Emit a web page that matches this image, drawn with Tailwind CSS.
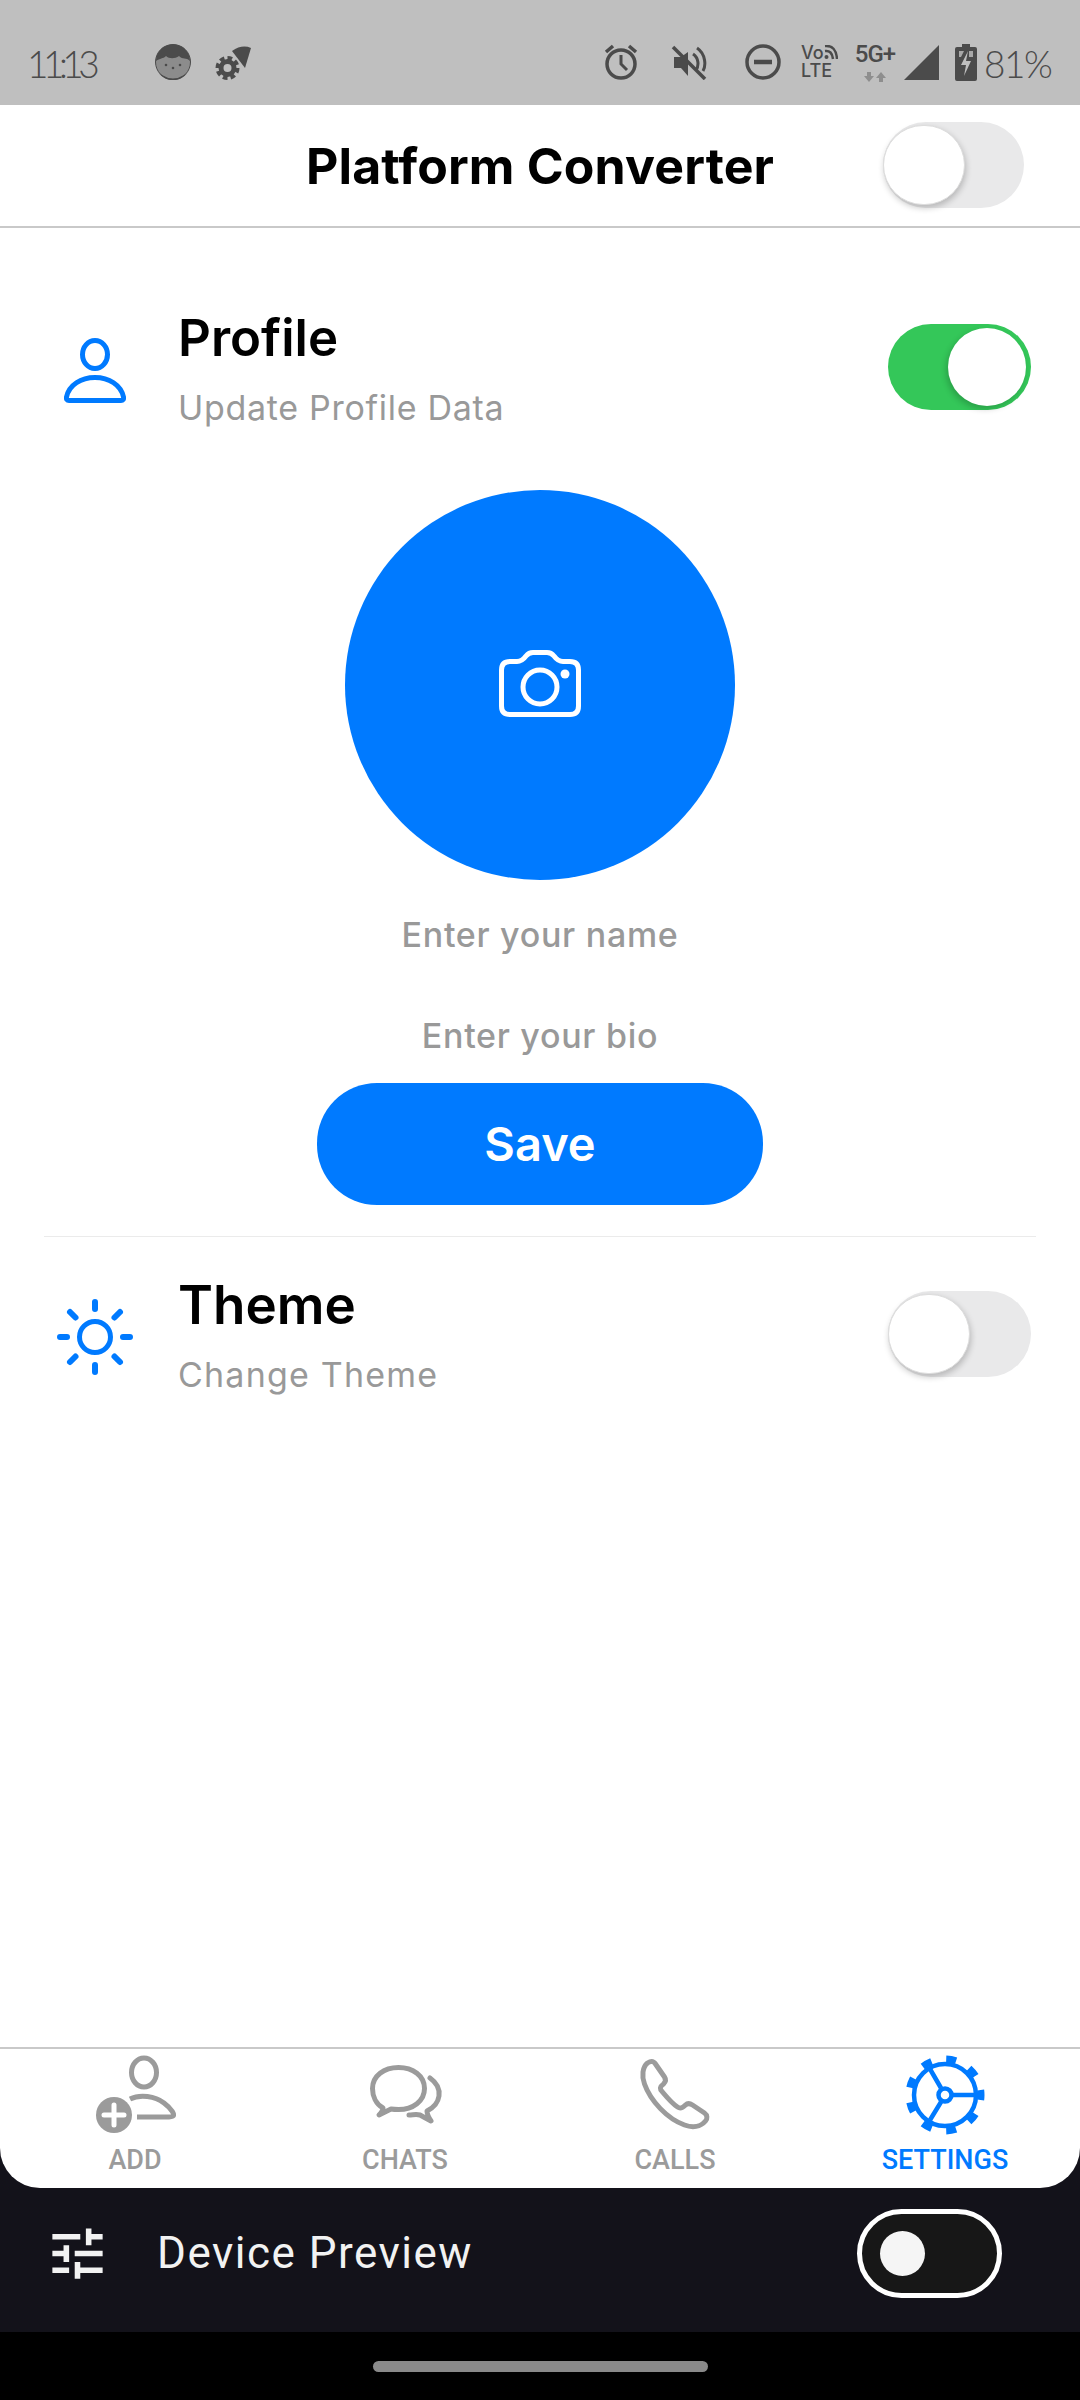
<!doctype html>
<html>
<head>
<meta charset="utf-8">
<script src="https://cdn.jsdelivr.net/npm/@tailwindcss/browser@4"></script>
</head>
<body class="m-0 bg-white">
<div class="w-[1080px] h-[2400px] flex flex-col overflow-hidden bg-white font-['Inter',sans-serif]">

  <!-- status bar -->
  <div class="h-[105px] bg-[#bfbfbf] flex items-start pt-[44px] text-[#4b4b4b]">
    <div class="ml-[27px] w-[128px] pt-[2px] text-[37px] leading-[36px] font-light tracking-[-5.5px] font-['Lato',sans-serif]">11:13</div>
    <svg class="w-[36px] h-[36px]" viewBox="0 0 36 36"><circle cx="18" cy="18" r="17.500" fill="#8c8c8c" stroke="#4b4b4b" stroke-width="1"/><path d="M1 17C1 7 9 .5 18 .5S35 7 35 17C31 13 28 16 24 12 20 15 14 15 11 12 8 15 5 14 1 17Z" fill="#4b4b4b"/><path d="M8 31.500a18 18 0 0 0 20 0l4 -2a18 18 0 0 1 -28 0Z" fill="#4b4b4b"/><circle cx="11" cy="21" r="1.300" fill="#4b4b4b"/><circle cx="18" cy="24" r="1.300" fill="#4b4b4b"/><circle cx="25" cy="21" r="1.300" fill="#4b4b4b"/></svg>
    <svg class="ml-[24px] w-[36px] h-[36px]" viewBox="0 0 36 36"><path d="M17 7Q27 0 36 4L30 24Z" fill="#4b4b4b"/><circle cx="12.500" cy="24" r="6.500" fill="none" stroke="#4b4b4b" stroke-width="5"/><circle cx="12.500" cy="24" r="10" fill="none" stroke="#4b4b4b" stroke-width="4" pathLength="80" stroke-dasharray="6 4"/></svg>
    <div class="flex-1"></div>
    <svg class="w-[36px] h-[36px]" viewBox="0 0 36 36"><circle cx="18" cy="20" r="14" fill="none" stroke="#4b4b4b" stroke-width="3.500"/><path d="M18 11V20L24 26" fill="none" stroke="#4b4b4b" stroke-width="3"/><path d="M3 8 10 2M33 8 26 2" stroke="#4b4b4b" stroke-width="3.500" fill="none"/></svg>
    <svg class="ml-[32px] w-[36px] h-[36px]" viewBox="0 0 36 36"><path d="M2 3 34 35" stroke="#4b4b4b" stroke-width="3.500"/><path d="M3 13H10L17 8V32L10 24H3Z" fill="#4b4b4b"/><path d="M22 10C28 14 28 22 25 26M26 4C35 10 35 22 32 27" fill="none" stroke="#4b4b4b" stroke-width="3"/></svg>
    <svg class="ml-[38px] w-[36px] h-[36px]" viewBox="0 0 36 36"><circle cx="18" cy="18" r="16" fill="none" stroke="#4b4b4b" stroke-width="3.500"/><path d="M9 18H27" stroke="#4b4b4b" stroke-width="4.500"/></svg>
    <div class="ml-[20px] w-[38px] h-[36px] flex flex-col font-['Inter',sans-serif] font-medium">
      <div class="flex items-center h-[18px]"><span class="text-[18px] leading-[18px]">Vo</span><svg class="w-[14px] h-[16px]" viewBox="0 0 14 16"><path d="M1 6Q8 5 9 14M1 1Q12 0 13 14" fill="none" stroke="#4b4b4b" stroke-width="2.500"/><circle cx="2.500" cy="12" r="2" fill="#4b4b4b"/></svg></div>
      <div class="text-[18px] leading-[18px]">LTE</div>
    </div>
    <div class="ml-[14px] w-[44px] h-[38px] flex flex-col items-center">
      <div class="text-[24px] leading-[20px] font-medium tracking-[-1px] font-['Roboto',sans-serif]">5G+</div>
      <svg class="mt-[8px] w-[22px] h-[10px]" viewBox="0 0 22 10"><path d="M3 0H7V4H10L5 10 0 4H3ZM15 10H19V6H22L17 0 12 6H15Z" fill="#8e8e8e"/></svg>
    </div>
    <svg class="ml-[7px] w-[36px] h-[36px]" viewBox="0 0 36 36"><path d="M0 36 35 1V36Z" fill="#4b4b4b"/></svg>
    <svg class="ml-[15px] w-[22px] h-[37px]" viewBox="0 0 22 37"><path d="M7 0H15V3H20Q22 3 22 5V35Q22 37 20 37H2Q0 37 0 35V5Q0 3 2 3H7Z" fill="#4b4b4b"/><path d="M4 7H9L6 13H4ZM14 7H18V13H14Z" fill="#a8a8a8"/><path d="M13 7 6 21H11L9 32 16 17H11Z" fill="#bfbfbf"/></svg>
    <div class="ml-[7px] w-[68px] text-[37px] leading-[36px] font-light tracking-[-1.5px] font-['Lato',sans-serif] whitespace-nowrap pt-[2px]">81%</div>
    <div class="w-[28px]"></div>
  </div>

  <!-- header -->
  <div class="h-[123px] shrink-0 border-b-2 border-[#c9c9c9] grid grid-cols-[1fr_auto_1fr] items-center">
    <div></div>
    <div class="text-[50px] leading-[56px] font-bold text-black tracking-[0.15px]">Platform Converter</div>
    <div class="flex justify-end pr-[56px] pb-[2px]">
      <div class="w-[141px] h-[86px] rounded-full bg-[#e9e9ea] flex items-center">
        <div class="w-[82px] h-[80px] rounded-full bg-white border border-[#ddd] shadow-[1px_3px_6px_rgba(0,0,0,0.22)]"></div>
      </div>
    </div>
  </div>

  <!-- content -->
  <div class="flex-1 flex flex-col">
    <div class="mt-[79px] h-[120px] flex items-center">
      <div class="w-[178px] shrink-0 mt-[6px]">
        <svg class="ml-[64px] w-[62px] h-[65px]" viewBox="0 0 62 65" fill="none" stroke="#007aff" stroke-width="5"><ellipse cx="31" cy="16.500" rx="12.500" ry="14"/><path d="M5 62.500H57Q60 62.500 59.500 59C57 47 45 39.500 31 39.500 17 39.500 5 47 2.500 59Q2 62.500 5 62.500Z"/></svg>
      </div>
      <div class="flex-1 mt-[2px]">
        <div class="text-[51px] leading-[60px] font-semibold text-black">Profile</div>
        <div class="mt-[20px] text-[34px] leading-[40px] tracking-[0.7px] text-[#999999]">Update Profile Data</div>
      </div>
      <div class="w-[143px] h-[86px] mr-[49px] rounded-full bg-[#34c759] flex items-center justify-end pr-[5px]">
        <div class="w-[78px] h-[78px] rounded-full bg-white shadow-[-2px_3px_6px_rgba(0,0,0,0.2)]"></div>
      </div>
    </div>

    <div class="mt-[63px] self-center w-[390px] h-[390px] rounded-full bg-[#007aff] flex items-center justify-center">
      <svg class="mb-[3px] w-[82px] h-[67px]" viewBox="0 0 82 67" fill="none" stroke="#ffffff" stroke-width="5"><path d="M12 11.500H18C22 11.500 24 10 27 6 29 3.500 31 2.500 34 2.500H48C51 2.500 53 3.500 55 6 58 10 60 11.500 64 11.500H71Q79.500 11.500 79.500 20V56Q79.500 64.500 71 64.500H11Q2.500 64.500 2.500 56V20Q2.500 11.500 11 11.500Z"/><circle cx="41" cy="37" r="17"/><circle cx="66" cy="24" r="4.500" fill="#ffffff" stroke="none"/></svg>
    </div>

    <div class="mt-[29px] h-[50px] flex items-center justify-center text-[34px] tracking-[0.7px] font-medium text-[#999999]">Enter your name</div>
    <div class="mt-[51px] h-[50px] flex items-center justify-center text-[34px] tracking-[0.7px] font-medium text-[#999999]">Enter your bio</div>
    <div class="mt-[23px] self-center w-[446px] h-[122px] rounded-[60px] bg-[#007aff] flex items-center justify-center text-[47px] font-semibold text-white">Save</div>
    <div class="mt-[31px] mx-[44px] h-[1px] bg-[#ebebeb]"></div>

    <div class="mt-[36px] h-[120px] flex items-center">
      <div class="w-[178px] shrink-0 mt-[8px]">
        <svg class="ml-[57px] w-[76px] h-[76px]" viewBox="0 0 76 76" fill="none" stroke="#007aff"><circle cx="38" cy="38" r="15.500" stroke-width="5"/><path d="M38 3V10M38 66V73M3 38H10M66 38H73M13 13 18.500 18.500M63 13 57.500 18.500M13 63 18.500 57.500M63 63 57.500 57.500" stroke-width="6" stroke-linecap="round"/></svg>
      </div>
      <div class="flex-1 mt-[3px]">
        <div class="text-[53px] leading-[60px] font-semibold text-black">Theme</div>
        <div class="mt-[20px] text-[34px] leading-[40px] tracking-[1.2px] text-[#999999]">Change Theme</div>
      </div>
      <div class="w-[143px] h-[86px] mr-[49px] mt-[2px] rounded-full bg-[#e9e9ea] flex items-center">
        <div class="w-[82px] h-[80px] rounded-full bg-white border border-[#ddd] shadow-[1px_3px_6px_rgba(0,0,0,0.22)]"></div>
      </div>
    </div>
  </div>

  <!-- tab bar + preview strip -->
  <div class="bg-[#13121a]">
    <div class="h-[141px] bg-white border-t-2 border-[#c9c9c9] rounded-b-[40px] grid grid-cols-4">
      <div class="flex flex-col items-center">
        <svg class="w-[82px] h-[92px]" viewBox="0 0 82 92" fill="none" stroke="#9b9b9b" stroke-width="5"><ellipse cx="50" cy="23.500" rx="12.500" ry="14.500"/><path d="M36 50C46 45 61 47 70 54 78 60 81 66 79 67 78 68 76 68 72 68H43"/><circle cx="20" cy="66" r="18" fill="#9b9b9b" stroke="none"/><path d="M20 56V76M10 66H30" stroke="#ffffff" stroke-width="5" stroke-linecap="round"/></svg>
        <div class="mt-[2px] text-[27px] leading-[34px] font-medium text-[#9b9b9b] font-['Roboto',sans-serif]">ADD</div>
      </div>
      <div class="flex flex-col items-center">
        <svg class="w-[82px] h-[92px]" viewBox="0 0 82 92" fill="none" stroke="#9b9b9b" stroke-width="5"><path d="M19 59C12 55 8.500 47 8.500 39.500 8.500 27 20 18.500 34.500 18.500S60.500 27 60.500 39.500 49 60.500 34.500 60.500C32 60.500 30 60.500 27 60L15 66C18 63 19 61 19 59Z" stroke-linejoin="round"/><path d="M66 29C73 34 76 40 75 47 74 54 69 59 63 62 63 66 65 69 67 72L56 66C52 65 49 66 45 66" stroke-linecap="round" stroke-linejoin="round"/></svg>
        <div class="mt-[2px] text-[27px] leading-[34px] font-medium text-[#9b9b9b] font-['Roboto',sans-serif]">CHATS</div>
      </div>
      <div class="flex flex-col items-center">
        <svg class="w-[82px] h-[92px]" viewBox="0 0 82 92" fill="none" stroke="#9b9b9b" stroke-width="5"><path transform="translate(-2.500 4)" d="M16 10C19 8 22 8 24 11L33 24C35 27 34 29 32 31 28 34 28 36 31 39 36 45 40 50 46 54 49 56 51 55 54 52 56 50 58 50 61 52L73 60C76 62 76 66 74 68 69 74 61 75 53 72 36 66 19 48 13 31 10 23 11 14 16 10Z" stroke-linejoin="round"/></svg>
        <div class="mt-[2px] text-[27px] leading-[34px] font-medium text-[#9b9b9b] font-['Roboto',sans-serif]">CALLS</div>
      </div>
      <div class="flex flex-col items-center">
        <svg class="w-[82px] h-[92px]" viewBox="0 0 82 92" fill="none" stroke="#007aff"><circle cx="41" cy="46" r="31" stroke-width="4.500"/><circle cx="41" cy="46" r="36" stroke-width="7" pathLength="180" stroke-dasharray="8 12" stroke-dashoffset="4"/><circle cx="41" cy="46" r="6.500" stroke-width="4.500"/><path d="M49 46H72M37 39 26 20M37 53 26 71" stroke-width="4.500"/></svg>
        <div class="mt-[2px] text-[27px] leading-[34px] font-medium text-[#007aff] font-['Roboto',sans-serif]">SETTINGS</div>
      </div>
    </div>
    <div class="h-[144px] flex items-center pb-[14px]">
      <svg class="ml-[44px] w-[67px] h-[67px] shrink-0" viewBox="0 0 24 24" fill="#f2f2f2"><path d="M3 17v2h6v-2H3zM3 5v2h10V5H3zm10 16v-2h8v-2h-8v-2h-2v6h2zM7 9v2H3v2h4v2h2V9H7zm14 4v-2H11v2h10zm-6-4h2V7h4V5h-4V3h-2v6z"/></svg>
      <div class="ml-[46px] flex-1 text-[44px] leading-[52px] tracking-[1.5px] text-[#f2f2f2] font-['Roboto',sans-serif]">Device Preview</div>
      <div class="mr-[78px] w-[145px] h-[89px] rounded-full bg-[#171717] border-[5px] border-white flex items-center pl-[18px]">
        <div class="w-[45px] h-[45px] rounded-full bg-[#f5f5f5]"></div>
      </div>
    </div>
  </div>

  <!-- nav bar -->
  <div class="h-[68px] shrink-0 bg-black flex justify-center pt-[29px]">
    <div class="w-[335px] h-[11px] rounded-full bg-[#8a8a8a]"></div>
  </div>
</div>
</body>
</html>
